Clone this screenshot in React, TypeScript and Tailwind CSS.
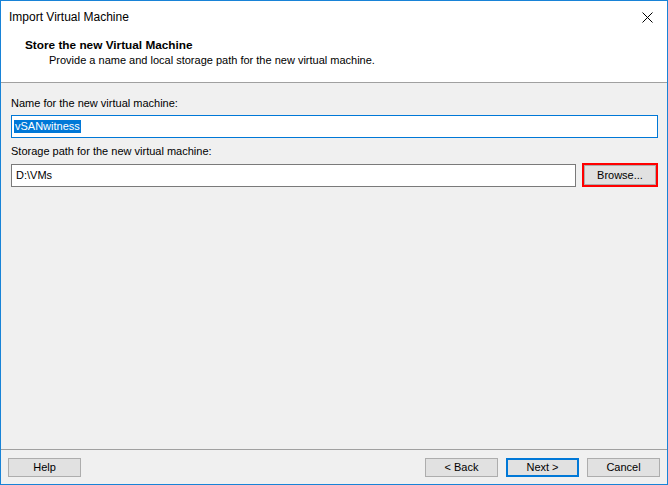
import React from "react";

const font = { fontFamily: '"Liberation Sans", Arial, sans-serif' };

function Btn({ children, primary }: { children: React.ReactNode; primary?: boolean }) {
  return (
    <div
      className={
        "w-[73px] h-[19px] bg-[#e1e1e1] flex items-center justify-center text-[11px] text-black " +
        (primary ? "border-2 border-[#0078d7]" : "border border-[#adadad]")
      }
    >
      {children}
    </div>
  );
}

export default function App() {
  return (
    <div
      className="w-[668px] h-[485px] border border-[#1883d7] bg-[#f0f0f0] flex flex-col overflow-hidden text-black"
      style={font}
    >
      {/* title bar */}
      <div className="h-[31px] bg-white flex items-center pl-[8px] pr-[14px] shrink-0">
        <span className="text-[12px] leading-[16px]">Import Virtual Machine</span>
        <div className="flex-1" />
        <svg width="11" height="11" viewBox="0 0 11 11" className="mt-[1px]">
          <path d="M0.5 0.5 L10.5 10.5 M10.5 0.5 L0.5 10.5" stroke="#000" strokeWidth="1" fill="none" />
        </svg>
      </div>
      {/* header */}
      <div className="h-[50px] bg-white shrink-0 pt-[5px] pl-[24px]">
        <div className="text-[11.8px] leading-[16px] font-bold">Store the new Virtual Machine</div>
        <div className="text-[11px] leading-[14px] pl-[24px]">
          Provide a name and local storage path for the new virtual machine.
        </div>
      </div>
      <div className="h-px bg-[#a0a0a0] shrink-0" />
      {/* body */}
      <div className="flex-1 pl-[10px] pr-[9px] pt-[13px]">
        <div className="text-[11px] leading-[14px]">Name for the new virtual machine:</div>
        <div className="mt-[5px] h-[23px] border border-[#0078d7] bg-white flex items-center pl-[2px]">
          <span className="bg-[#0078d7] text-white text-[11px] leading-[13px] px-[1px]">vSANwitness</span>
        </div>
        <div className="mt-[6px] text-[11px] leading-[14px]">Storage path for the new virtual machine:</div>
        <div className="mt-[5px] flex items-center gap-[6px]">
          <div className="flex-1 h-[23px] border border-[#7a7a7a] bg-white flex items-center pl-[4px] text-[11px]">
            D:\VMs
          </div>
          <div className="w-[76px] h-[24px] border-2 border-[#ff0000] flex">
            <div className="flex-1 bg-[#e1e1e1] border border-[#adadad] flex items-center justify-center text-[11px]">
              Browse...
            </div>
          </div>
        </div>
      </div>
      <div className="h-px bg-[#a0a0a0] shrink-0" />
      {/* footer */}
      <div className="h-[34px] shrink-0 flex pt-[8px] pl-[7px] pr-[7px]">
        <Btn>Help</Btn>
        <div className="flex-1" />
        <div className="flex gap-[8px]">
          <Btn>&lt; Back</Btn>
          <Btn primary>Next &gt;</Btn>
          <Btn>Cancel</Btn>
        </div>
      </div>
    </div>
  );
}
